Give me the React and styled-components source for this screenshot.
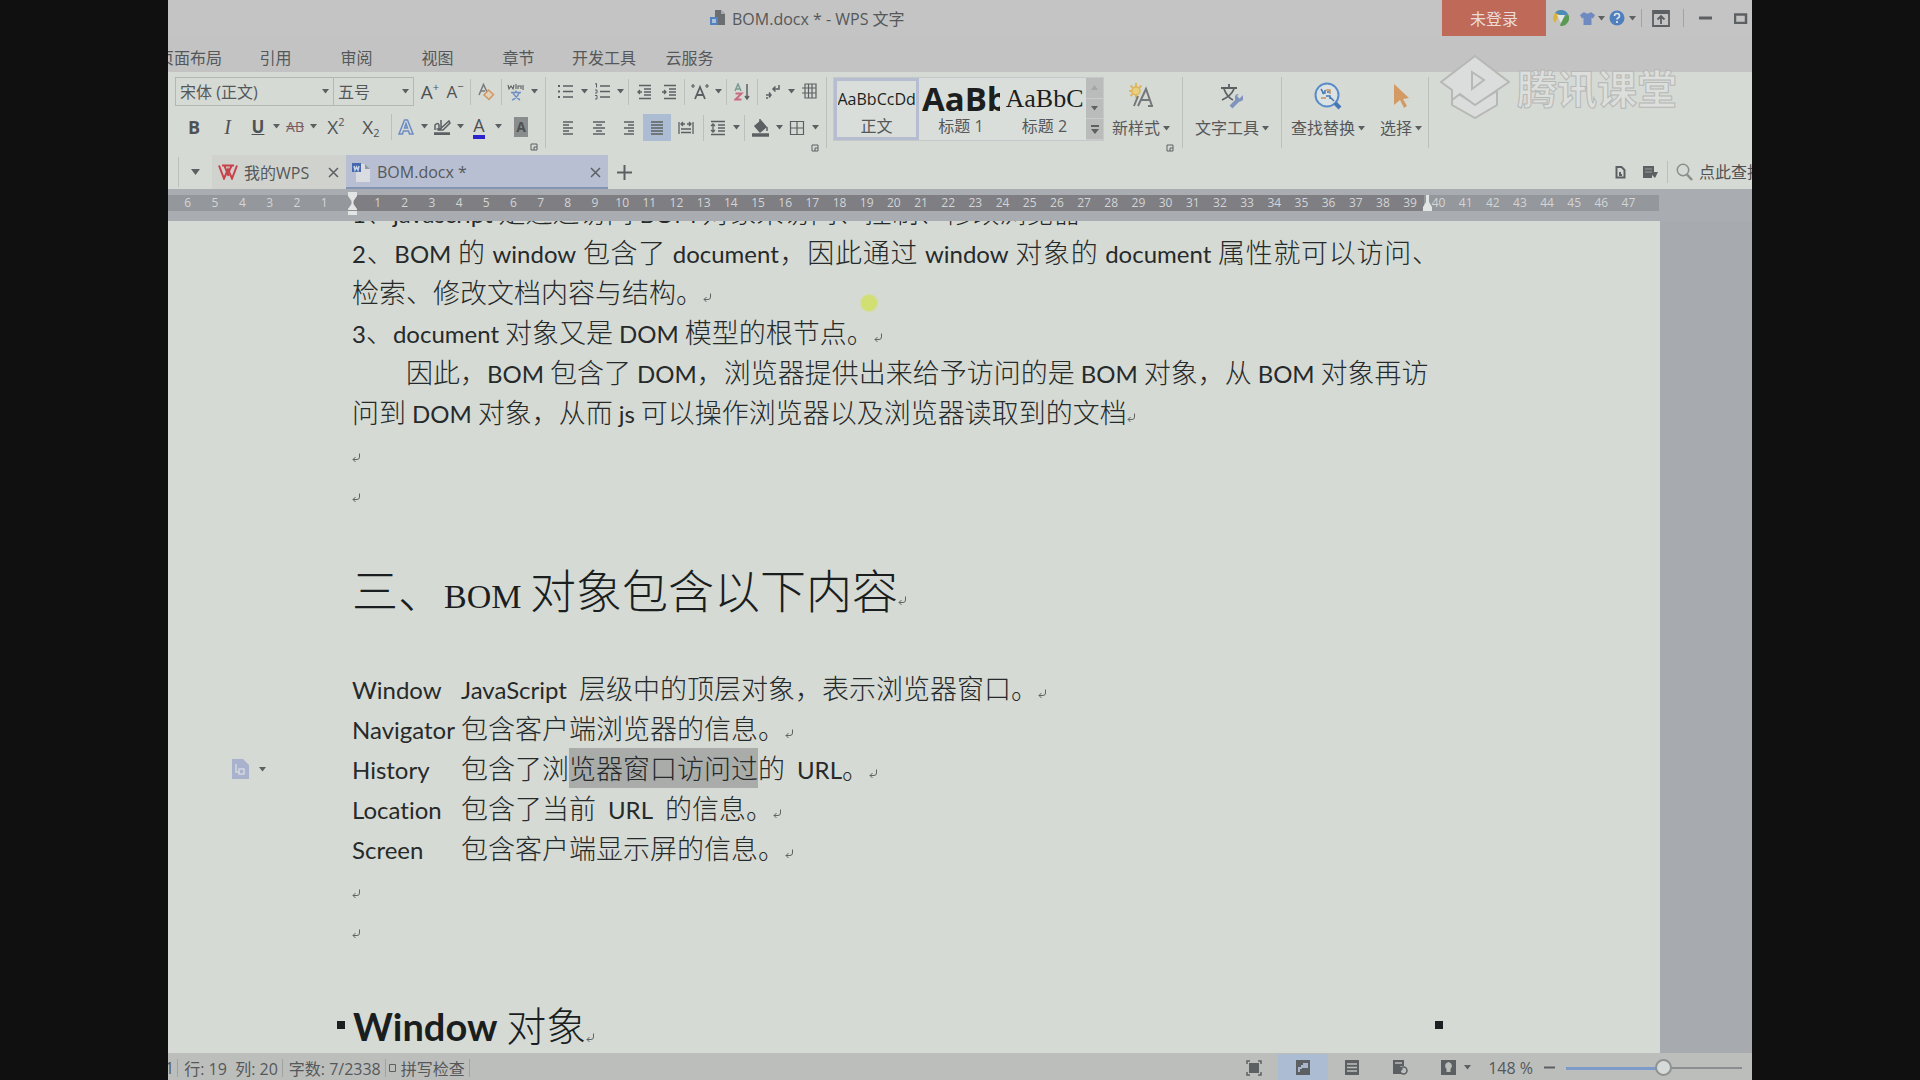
import React from "react";
import styled, { createGlobalStyle } from "styled-components";

const ui = `"Open Sans", "Noto Sans CJK SC", sans-serif`;
const bodyFont = `"Noto Sans CJK SC", sans-serif`;

const Global = createGlobalStyle`
  *, *::before, *::after { box-sizing: border-box; }
  body { margin: 0; background: #101010; font-family: ${ui}; font-size: 16px; color: #55585a; }
  button, select, input { font: inherit; color: inherit; }
  button { background: none; border: 0; padding: 0; margin: 0; }
  svg { display: block; flex: none; }
`;

const Stage = styled.div`
  display: flex;
  justify-content: center;
  height: 100vh;
  overflow: hidden;
`;

const AppWindow = styled.div`
  position: relative;
  display: flex;
  flex-direction: column;
  width: 82.5%;
  overflow: hidden;
  background: #a7aaae;
`;

/* Title bar */
const TitleBar = styled.header`
  display: flex;
  align-items: flex-start;
  height: 37px;
  padding-left: 542px;
  background: #c4c4c4;
`;
const Title = styled.h1`
  display: flex;
  align-items: center;
  gap: 6px;
  height: 36px;
  margin: 0 auto 0 0;
  font-size: 16px;
  font-weight: 400;
  white-space: nowrap;
`;
const Login = styled.button`
  width: 104px;
  height: 36px;
  background: #bf6959;
  color: #ecdcd8;
`;
const TitleTools = styled.div`
  display: flex;
  align-items: center;
  height: 36px;
`;
const Cell = styled.button`
  display: inline-flex;
  align-items: center;
  justify-content: ${(p) => (p.$end ? "flex-end" : "center")};
  gap: 8px;
  flex: none;
  width: ${(p) => p.$w}px;
  height: 27px;
  background: ${(p) => (p.$on ? "#acbcd2" : "none")};
`;
const Divider = styled.span`
  flex: none;
  width: 1px;
  height: ${(p) => p.$h}px;
  margin: 0 ${(p) => (p.$m === undefined ? 2 : p.$m)}px;
  background: ${(p) => p.$c || "#bcc0bd"};
`;

/* Menu */
const Menu = styled.nav`
  display: flex;
  height: 35px;
  margin-left: -23px;
  background: #c3c3c3;
`;
const MenuItem = styled.button`
  min-width: 81px;
  height: 42px;
  padding: 0 13px;
  line-height: 42px;
  white-space: nowrap;
`;

/* Ribbon */
const Ribbon = styled.section`
  display: flex;
  height: 83px;
  padding: 5px 0 0 7px;
  background: #d6dad5;
`;
const Group = styled.div`
  display: flex;
  flex-direction: column;
  flex: none;
  padding: 0 ${(p) => p.$r || 5}px 0 ${(p) => p.$l || 0}px;
`;
const Row = styled.div`
  display: flex;
  align-items: center;
  height: 29px;
  margin-bottom: ${(p) => p.$gap || 0}px;
  padding-left: ${(p) => p.$l || 0}px;
`;
const Corner = styled.button`
  align-self: flex-end;
  width: 12px;
  height: 10px;
  padding: 2px;
`;
const Picker = styled.label`
  position: relative;
  display: flex;
  align-items: center;
  flex: none;
  width: ${(p) => p.$w}px;
  height: 29px;
  margin-right: ${(p) => p.$m || 0}px;
  border: 1px solid #b4b8b5;
  & + & { border-left: 0; }
  select {
    appearance: none;
    flex: 1;
    min-width: 0;
    height: 27px;
    padding: 0 0 0 4px;
    border: 0;
    background: transparent;
  }
  svg { margin-right: 4px; }
`;
const Glyph = styled.span`
  font-size: ${(p) => p.$s || 19}px;
  line-height: 20px;
  color: ${(p) => p.$c || "#4f5254"};
  font-weight: ${(p) => (p.$b ? 700 : 500)};
  font-style: ${(p) => (p.$i ? "italic" : "normal")};
  font-family: ${(p) => (p.$i ? `"Liberation Serif", serif` : ui)};
  text-decoration: ${(p) => p.$d || "none"};
  border-bottom: ${(p) => (p.$bar ? `4px solid ${p.$bar}` : "0")};
  background: ${(p) => p.$bg || "none"};
  padding: ${(p) => (p.$bg ? "0 2px" : "0")};
  sup, sub { font-size: 11px; line-height: 0; }
  sup { vertical-align: 8px; }
  sub { vertical-align: -3px; }
`;
const Gallery = styled.div`
  display: flex;
  height: 64px;
  border: 1px solid #c4c8c8;
  background: #dadeda;
`;
const StyleCard = styled.button`
  display: flex;
  flex-direction: column;
  align-items: center;
  width: ${(p) => p.$w}px;
  height: 62px;
  overflow: hidden;
  border: 3px solid ${(p) => (p.$on ? "#b7bdd0" : "transparent")};
`;
const Sample = styled.span`
  height: 36px;
  width: 78px;
  overflow: hidden;
  text-align: left;
  white-space: nowrap;
  color: #1c1f1e;
  font: ${(p) => p.$font};
`;
const CardLabel = styled.span`
  line-height: 18px;
`;
const Scroller = styled.div`
  display: flex;
  flex-direction: column;
  width: 17px;
  background: #b9bcba;
`;
const ScrollBtn = styled.button`
  display: flex;
  align-items: center;
  justify-content: center;
  flex: 1;
  border-bottom: 1px solid #c9ccca;
`;
const BigTool = styled.button`
  display: flex;
  flex-direction: column;
  align-items: center;
  flex: none;
  width: ${(p) => p.$w}px;
  height: 65px;
`;
const BigIcon = styled.span`
  display: flex;
  align-items: center;
  justify-content: center;
  height: 38px;
`;
const BigLabel = styled.span`
  display: flex;
  align-items: center;
  gap: 3px;
  line-height: 26px;
  white-space: nowrap;
`;

/* Watermark laid over the ribbon */
const Watermark = styled.div`
  position: absolute;
  top: 55px;
  right: 75px;
  display: flex;
  align-items: center;
  gap: 7px;
  font: 700 40px/64px ${bodyFont};
  color: #dddfdd;
  -webkit-text-stroke: 1px #b6b8b6;
  pointer-events: none;
`;

/* Document tabs */
const TabBar = styled.div`
  display: flex;
  align-items: center;
  height: 34px;
  padding-left: 10px;
  background: #d6dad5;
`;
const Tab = styled.div`
  display: flex;
  align-items: center;
  flex: none;
  gap: 6px;
  width: ${(p) => p.$w}px;
  height: 34px;
  padding: 2px 5px 0 6px;
  background: ${(p) => (p.$on ? "#b8bfd2" : "#d0d2cd")};
  border-bottom: 2px solid ${(p) => (p.$on ? "#8296b4" : "#d0d2cd")};
`;
const TabName = styled.button`
  flex: 1;
  text-align: left;
  white-space: nowrap;
`;
const TabEnd = styled.div`
  display: flex;
  align-items: center;
  margin-left: auto;
  width: 147px;
  overflow: hidden;
`;
const Search = styled.label`
  display: flex;
  align-items: center;
  gap: 6px;
  padding-left: 8px;
  input {
    width: 120px;
    padding: 0;
    border: 0;
    background: transparent;
    &::placeholder { color: #4f5254; opacity: 1; }
  }
`;

/* Ruler */
const RulerWrap = styled.div`
  height: 32px;
  padding: 6px 93px 0 0;
  background: #a9acb0;
`;
const Ruler = styled.div`
  position: relative;
  display: grid;
  grid-template-columns: minmax(0, 184fr) minmax(0, 1072fr) minmax(0, 235fr);
  height: 16px;
`;
const Scale = styled.div`
  display: flex;
  padding: 0 ${(p) => p.$r}px 0 ${(p) => p.$l}px;
  background: ${(p) => (p.$dark ? "#7e7e83" : "#94979b")};
  color: #d3d5d6;
  font-size: 12px;
  line-height: 16px;
  span { flex: 1 1 0; width: 0; text-align: center; }
`;
const Marker = styled.div`
  position: absolute;
  top: -3px;
  left: ${(p) => p.$x};
`;

/* Page */
const Desk = styled.main`
  flex: 1;
  min-height: 0;
  overflow: hidden;
  padding-right: 92px;
`;
const Sheet = styled.article`
  position: relative;
  height: 100%;
  padding-left: 184px;
  overflow: hidden;
  background: #d5dad5;
  color: #272a2a;
  font-family: ${bodyFont};
  font-size: 27px;
  font-weight: 300;
  font-variant-ligatures: none;
`;
const Flow = styled.div`
  margin-top: -29px;
`;
const Line = styled.p`
  display: flex;
  height: 40px;
  margin: 0;
  line-height: 40px;
  white-space: pre;
  padding-left: ${(p) => (p.$indent ? 54 : 0)}px;
`;
/* A full line of a justified paragraph; the closing mark may hang in the margin. */
const FullLine = styled.p`
  width: 1087px;
  height: 40px;
  margin: 0;
  line-height: 40px;
  white-space: nowrap;
  text-align: justify;
  text-align-last: justify;
`;
const Latin = styled.span`
  font-family: Lato, sans-serif;
  font-size: 24px;
  font-weight: 400;
`;
const Picked = styled.mark`
  height: 40px;
  background: #aaacaa;
  color: inherit;
`;
const Section = styled.h2`
  display: flex;
  height: 60px;
  margin: 46px 0 50px;
  font-size: 46px;
  font-weight: 300;
  line-height: 60px;
  white-space: pre;
  color: #1b1e1e;
`;
const SectionLatin = styled.span`
  font-family: "Liberation Serif", serif;
  font-size: 34px;
  font-weight: 400;
`;
const Term = styled.span`
  width: 109px;
`;
const Sub = styled.h3`
  display: flex;
  align-items: center;
  height: 60px;
  margin: 47px 0 0 -15px;
  font-size: 40px;
  font-weight: 300;
  line-height: 60px;
  white-space: pre;
  color: #1b1e1e;
`;
const SubLatin = styled.span`
  font-family: Lato, sans-serif;
  font-size: 38px;
  font-weight: 700;
`;
const Dot = styled.span`
  width: 8px;
  height: 8px;
  margin-right: ${(p) => p.$r || 0}px;
  margin-left: ${(p) => (p.$end ? "auto" : 0)};
  background: #1c1f1f;
`;
const Pointer = styled.span`
  position: absolute;
  left: 693px;
  top: 74px;
  width: 16px;
  height: 16px;
  border-radius: 50%;
  background: #d2df72;
  box-shadow: 0 0 3px #d2df72;
`;
const PasteTag = styled.button`
  position: absolute;
  left: 64px;
  top: 538px;
  display: flex;
  align-items: center;
  gap: 10px;
`;
const Return = styled.span`
  display: flex;
  align-self: flex-end;
  padding-bottom: ${(p) => p.$b || 9}px;
`;

/* Status bar */
const Status = styled.footer`
  display: flex;
  align-items: center;
  height: 27px;
  padding-top: 2px;
  background: #bcbebc;
  white-space: pre;
`;
const StatusText = styled.span`
  padding: 0 ${(p) => p.$r || 4}px 0 ${(p) => p.$l || 6}px;
`;
const PageNumber = styled.span`
  margin-left: -3px;
  padding-right: 3px;
`;
const StatusEnd = styled.div`
  display: flex;
  align-items: center;
  margin-left: auto;
`;
const Zoom = styled.input`
  appearance: none;
  width: 176px;
  height: 16px;
  margin: 0 10px 0 7px;
  background: linear-gradient(#7d9ac8, #7d9ac8) 0 7px / 97px 3px no-repeat,
    linear-gradient(#8b8e8e, #8b8e8e) 0 7px / 100% 2px no-repeat;
  &::-webkit-slider-thumb {
    appearance: none;
    width: 17px;
    height: 17px;
    border: 2px solid #8e9292;
    border-radius: 50%;
    background: #d6dad8;
  }
`;

const G = "#5d6062";
const Svg = ({ w = 18, h = 18, children, ...r }) => (
  <svg width={w} height={h} viewBox={`0 0 ${w} ${h}`} fill="none" stroke={G} strokeWidth="1.5" aria-hidden="true" {...r}>{children}</svg>
);
const Caret = () => <Svg w={7} h={5} stroke="none"><path d="M0 0h7L3.5 4.5z" fill={G} /></Svg>;
const CaretBtn = ({ w = 12, label }) => <Cell $w={w} aria-label={label + "选项"}><Caret /></Cell>;
const Cross = () => <Svg w={11} h={11}><path d="M1 1l9 9M10 1l-9 9" /></Svg>;
const Mark = ({ b }) => (
  <Return $b={b}>
    <Svg w={9} h={10} strokeWidth="1" stroke="#5f6363">
      <path d="M7.500 .5v3.500q0 2.500-2.500 2.500H1M3.500 4L1 6.500 3.500 9" />
    </Svg>
  </Return>
);
const Launcher = ({ label }) => (
  <Corner aria-label={label}><Svg w={8} h={8}><path d="M7 4V1H1v6h3M4 4h3v3H4z" strokeWidth="1" /></Svg></Corner>
);
const lines = (rows) => rows.map(([y, a, b]) => `M${a} ${y}H${b}`).join("");

const Bullets = ({ num }) => (
  <Svg w={17} h={17} strokeWidth="1.4">
    <path d="M6 3h10M6 8.500h10M6 14h10" />
    {num ? <path d="M1 1l1.500-.5v4M1 7h2v3H1M1 12.500h2v3.500H1" strokeWidth="1" /> : <path d="M1 3h2M1 8.500h2M1 14h2" strokeWidth="2" />}
  </Svg>
);
const Indent = ({ out }) => (
  <Svg w={15} h={16} strokeWidth="1.4">
    <path d="M2 1.500h12M7 5h7M7 8h7M7 11h7M2 14.500h12" />
    <path d={out ? "M5 8H1M3 6L1 8l2 2" : "M0 8h4M2 6l2 2-2 2"} />
  </Svg>
);
const Align = ({ k }) => {
  const r = { l: [[1, 11], [1, 7]], c: [[1, 13], [4, 10]], r: [[3, 13], [7, 13]], j: [[1, 13], [1, 13]] }[k];
  return <Svg w={14} h={14} strokeWidth="1.5"><path d={lines([1, 4, 7, 10, 13].map((y, i) => [y, r[i % 2][0], r[i % 2][1]]))} /></Svg>;
};

const rich = (text) => (
  <span>{text.split(/([A-Za-z0-9/]+)/).map((t, i) => (i % 2 ? <Latin key={i}>{t}</Latin> : t))}</span>
);
const range = (a, b) => Array.from({ length: b - a + 1 }, (_, i) => a + i);

export default function App() {
  return (
    <Stage>
      <Global />
      <AppWindow>
        <TitleBar>
          <Title>
            <Svg w={16} h={16} stroke="none">
              <path d="M5 0h6l4 4v11H5z" fill="#6b6e70" /><path d="M11 0v4h4" fill="#a9acac" />
              <path d="M0 7h8v8H0z" fill="#5582bd" /><path d="M2 9h4v4H2z" fill="#a9bfdc" />
            </Svg>
            BOM.docx * - WPS 文字
          </Title>
          <Login>未登录</Login>
          <TitleTools>
            <Cell $w={30} aria-label="皮肤中心">
              <Svg w={16} h={16} stroke="none">
                <path d="M8 0a8 8 0 0 0-6 13L5 7z" fill="#d9b53e" /><path d="M8 0a8 8 0 0 1 7 4l-5 4-5-4L2 3q2-3 6-3" fill="#4d8bb8" />
                <path d="M15 4a8 8 0 0 1-8 12l2-7z" fill="#5a9a54" /><path d="M4 5l4 8 4-8z" fill="#e3e6e4" />
              </Svg>
            </Cell>
            <Cell $w={22} aria-label="换肤"><Svg w={15} h={15} stroke="none"><path d="M4 1q3.500 3 7 0l4 3-2 3.500-1.500-1V14h-8V6.500L2 7.500 0 4z" fill="#6f8ac0" /></Svg></Cell>
            <Caret />
            <Cell $w={24} aria-label="帮助"><Svg w={16} h={16} stroke="none"><circle cx="8" cy="8" r="7.500" fill="#4f7fbd" /><path d="M5.500 6q0-2.500 2.500-2.500T10.500 6q0 1.200-1.500 2-1 .6-1 1.600M8 11v2" stroke="#dde4ea" strokeWidth="1.700" /></Svg></Cell>
            <Caret />
            <Divider $h={18} $m={5} $c="#a2a4a4" />
            <Cell $w={28} aria-label="隐藏功能区"><Svg><path d="M1 2h16v15H1zM1 4h16M9 15V7.500M5.500 10.500L9 7l3.500 3.500" strokeWidth="1.800" /></Svg></Cell>
            <Divider $h={18} $m={8} $c="#a2a4a4" />
            <Cell $w={26} aria-label="最小化"><Svg w={13} h={4}><path d="M0 2h13" strokeWidth="3" /></Svg></Cell>
            <Cell $w={34} $end aria-label="最大化"><Svg w={18} h={11}><path d="M1 1.500h11v8.500H1z" strokeWidth="2.500" /></Svg></Cell>
          </TitleTools>
        </TitleBar>
        <Menu>
          {["页面布局", "引用", "审阅", "视图", "章节", "开发工具", "云服务"].map((m) => <MenuItem key={m}>{m}</MenuItem>)}
        </Menu>

        <Ribbon>
          <Group>
            <Row $gap={6}>
              <Picker $w={159}><select aria-label="字体"><option>宋体 (正文)</option></select><Caret /></Picker>
              <Picker $w={80} $m={4}><select aria-label="字号"><option>五号</option></select><Caret /></Picker>
              <Cell $w={24}><Glyph>A<sup>+</sup></Glyph></Cell>
              <Cell $w={26}><Glyph $s={17}>A<sup>−</sup></Glyph></Cell>
              <Divider $h={26} />
              <Cell $w={26} aria-label="清除格式"><Svg><path d="M2 12L6.500 1.500 10 9M4 8h4" stroke="#77797b" /><path d="M11.500 7l5 4.500-4.500 5-5-4.500z" fill="#e0d2bd" stroke="#d0975f" /></Svg></Cell>
              <Divider $h={26} />
              <Cell $w={24} aria-label="拼音指南"><Svg><path d="M1 2l1 4 2-3 2 3 1-4M9 1v5M11 6V3h3v3M16 2v5" strokeWidth="1.100" /><path d="M4 9.500h10M9 7.500v2M6 10q2 4 7 7M12 10q-2 5-7 7" stroke="#6f8fc4" /></Svg></Cell>
              <CaretBtn label="拼音" />
            </Row>
            <Row $l={5}>
              <Cell $w={28}><Glyph $s={18} $b>B</Glyph></Cell>
              <Cell $w={39}><Glyph $s={20} $i>I</Glyph></Cell>
              <Cell $w={22}><Glyph $s={17} $b $d="underline">U</Glyph></Cell>
              <CaretBtn w={14} label="下划线" />
              <Cell $w={24}><Glyph $s={14} $c="#7d5d60" $d="line-through">AB</Glyph></Cell>
              <CaretBtn label="删除线" />
              <Cell $w={34}><Glyph>X<sup>2</sup></Glyph></Cell>
              <Cell $w={36}><Glyph>X<sub>2</sub></Glyph></Cell>
              <Divider $h={26} />
              <Cell $w={24} aria-label="文字效果"><Svg w={16} h={16}><path d="M1 15L6.500 1h3L15 15h-3.500l-1-3h-5l-1 3zM6.500 9h3L8 4.500z" stroke="#6c8cc4" /></Svg></Cell>
              <CaretBtn label="文字效果" />
              <Cell $w={24} aria-label="突出显示"><Svg w={18} h={17}><path d="M1 16h16" strokeWidth="3.500" /><path d="M2 12V7q3-3 4 0v4H3.500M8 2v9M6 12L16 3l1 2-7 7z" /></Svg></Cell>
              <CaretBtn label="突出显示" />
              <Cell $w={26}><Glyph $s={18} $bar="#2a23cf">A</Glyph></Cell>
              <CaretBtn label="字体颜色" />
              <Cell $w={34}><Glyph $s={14} $b $bg="#8a8d8d">A</Glyph></Cell>
            </Row>
            <Launcher label="字体设置" />
          </Group>
          <Divider $h={71} $m={0} />
          <Group $l={6}>
            <Row $gap={7}>
              <Cell $w={26} aria-label="项目符号"><Bullets /></Cell><CaretBtn label="项目符号" />
              <Cell $w={24} aria-label="编号"><Bullets num /></Cell><CaretBtn label="编号" />
              <Divider $h={26} />
              <Cell $w={26} aria-label="减少缩进"><Indent out /></Cell>
              <Cell $w={25} aria-label="增加缩进"><Indent /></Cell>
              <Divider $h={26} />
              <Cell $w={25} aria-label="中文版式"><Svg><path d="M4 16L9 4l5 12M6 12h6" strokeWidth="1.800" /><path d="M0 3h4M2 1v4M14 3h4M16 1v4" strokeWidth="1.200" /></Svg></Cell><CaretBtn label="中文版式" />
              <Divider $h={26} />
              <Cell $w={26} aria-label="排序"><Svg w={16} h={18}><path d="M1 8l3-7 3 7M2 6h4" stroke="#7b9a94" /><path d="M1.500 10.500h6l-6 6h6" stroke="#c96a80" strokeWidth="2" /><path d="M13 1v14M11 13l2 3 2-3" /></Svg></Cell>
              <Divider $h={26} />
              <Cell $w={25} aria-label="显示标记"><Svg w={16} h={16}><path d="M14 1v4H8M10.500 2.500L8 5l2.500 2.500M1 11h5M4 8.500L6 11l-2 2.500M1 14h2" /></Svg></Cell><CaretBtn label="显示标记" />
              <Cell $w={24} aria-label="制表位"><Svg w={16} h={17}><path d="M4 1h11v14H4zM1 5h14M1 10h14M7.500 1v14M11 1v14" strokeWidth="1.200" /></Svg></Cell>
            </Row>
            <Row $l={2}>
              <Cell $w={30} aria-label="左对齐"><Align k="l" /></Cell>
              <Cell $w={29} aria-label="居中"><Align k="c" /></Cell>
              <Cell $w={30} aria-label="右对齐"><Align k="r" /></Cell>
              <Cell $w={28} $on aria-label="两端对齐"><Align k="j" /></Cell>
              <Cell $w={30} aria-label="分散对齐"><Svg w={16} h={14}><path d="M1 1v12M15 1v12M3 3h4M9 3h4M5 1L3 3l2 2M11 1l2 2-2 2M3 8h10M3 11.500h10" strokeWidth="1.300" /></Svg></Cell>
              <Divider $h={26} />
              <Cell $w={24} aria-label="行距"><Svg w={16} h={16}><path d="M1 1.500h14M8 5h7M8 8h7M8 11h7M1 14.500h14M3 4v8M1 6l2-2 2 2M1 10l2 2 2-2" strokeWidth="1.300" /></Svg></Cell><CaretBtn label="行距" />
              <Divider $h={26} />
              <Cell $w={26} aria-label="底纹"><Svg w={17} h={18}><path d="M0 16h17" strokeWidth="3.500" /><path d="M3 7l6-5 5 6-6 5z" fill={G} /><path d="M8 0v5M15 8v4" /></Svg></Cell><CaretBtn label="底纹" />
              <Cell $w={24} aria-label="边框"><Svg w={16} h={16}><path d="M1.500 1.500h13v13h-13zM8 1.500v13M1.500 8h13" strokeWidth="1.200" /></Svg></Cell><CaretBtn label="边框" />
            </Row>
            <Launcher label="段落设置" />
          </Group>
          <Divider $h={71} $m={0} />
          <Group $l={6} $r={2}>
            <Gallery>
              <StyleCard $w={85} $on><Sample $font={`400 16px/36px ${ui}`}>AaBbCcDd</Sample><CardLabel>正文</CardLabel></StyleCard>
              <StyleCard $w={84}><Sample $font={`700 33px/36px ${ui}`}>AaBb</Sample><CardLabel>标题 1</CardLabel></StyleCard>
              <StyleCard $w={83}><Sample $font={`400 26px/36px "Liberation Serif", serif`}>AaBbC</Sample><CardLabel>标题 2</CardLabel></StyleCard>
              <Scroller>
                <ScrollBtn aria-label="上一行"><Svg w={7} h={5} stroke="none"><path d="M0 5h7L3.500 0z" fill="#a3a6a5" /></Svg></ScrollBtn>
                <ScrollBtn aria-label="下一行"><Caret /></ScrollBtn>
                <ScrollBtn aria-label="更多样式"><Svg w={8} h={9} stroke="none"><path d="M0 0h8v2H0zM0 4h8L4 9z" fill={G} /></Svg></ScrollBtn>
              </Scroller>
            </Gallery>
          </Group>
          <Group $r={6}>
            <BigTool $w={70}>
              <BigIcon>
                <Svg w={26} h={26}><path d="M8 0v4M8 12v3M1 8h3M2.500 2.500l3 3M13.500 2.500l-3 3M2.500 13l3-3" stroke="#dfb660" strokeWidth="2" /><circle cx="8" cy="8" r="4" fill="#e9d07f" stroke="#dfb660" /><path d="M10 23L18 6l6 17M13 17h9M20 23h5M6 23l4-10" strokeWidth="2" stroke="#75787a" /></Svg>
              </BigIcon>
              <BigLabel>新样式<Caret /></BigLabel>
            </BigTool>
            <Launcher label="样式设置" />
          </Group>
          <Divider $h={71} $m={0} />
          <BigTool $w={98}>
            <BigIcon><Svg w={25} h={26}><path d="M1 5h16M9 1v4M4 6q3 8 9 11M14 6Q11 13 2 17" strokeWidth="1.800" /><path d="M11 24l7-7" stroke="#7f93bd" strokeWidth="4" /><path d="M23 12l-3.500 3.500L17 13l2-2q-5 0-4 5 3 5 8 1z" fill="#7f93bd" stroke="none" /></Svg></BigIcon>
            <BigLabel>文字工具<Caret /></BigLabel>
          </BigTool>
          <Divider $h={71} $m={0} />
          <BigTool $w={92}>
            <BigIcon><Svg w={28} h={28}><circle cx="13" cy="13" r="11.500" stroke="#5b8cc8" strokeWidth="2" fill="#dbe2e4" /><path d="M21 21l5 5" stroke="#4677b5" strokeWidth="4" /><path d="M7 7l3 5M8 11h3v-3M13 10h3M12 14h4v3M16 15l4 4" stroke="#4677b5" /><path d="M12 8h4v4M7 16h5" stroke="#c9935c" /></Svg></BigIcon>
            <BigLabel>查找替换<Caret /></BigLabel>
          </BigTool>
          <BigTool $w={54}>
            <BigIcon><Svg w={16} h={24} stroke="none"><path d="M1 0l15 14-6 1 4 7-3 2-4-8-6 5z" fill="#d39a63" /></Svg></BigIcon>
            <BigLabel>选择<Caret /></BigLabel>
          </BigTool>
          <Divider $h={71} $m={0} />
        </Ribbon>

        <TabBar>
          <Divider $h={30} $m={0} />
          <Cell $w={33} aria-label="标签列表"><Svg w={9} h={6} stroke="none"><path d="M0 0h9L4.500 6z" fill={G} /></Svg></Cell>
          <Tab $w={134}>
            <Svg w={20} h={16}><path d="M1 1.500l5 13 4-9 4 9 5-13M4 1.500h12M6.500 2l4 10M13.500 2l-3 6" stroke="#c9404b" strokeWidth="2" /></Svg>
            <TabName>我的WPS</TabName>
            <Cell $w={15} aria-label="关闭 我的WPS"><Cross /></Cell>
          </Tab>
          <Tab $w={262} $on>
            <Svg w={19} h={19} stroke="none"><path d="M4 1h9l5 5v13H4z" fill="#d9dde2" /><path d="M13 1v5h5z" fill="#8e98aa" /><path d="M0 0h9v9H0z" fill="#4668ad" /><path d="M2 3l1 4 1.500-3L6 7l1-4" stroke="#c8d2e6" /></Svg>
            <TabName>BOM.docx *</TabName>
            <Cell $w={15} aria-label="关闭 BOM.docx"><Cross /></Cell>
          </Tab>
          <Cell $w={32} aria-label="新建"><Svg w={15} h={15}><path d="M7.500 0v15M0 7.500h15" strokeWidth="2" /></Svg></Cell>
          <TabEnd>
            <Cell $w={30} aria-label="文档"><Svg w={11} h={13}><path d="M1.500 1h5l3 3v7.500h-8zM5 6v3h2" strokeWidth="2" /></Svg></Cell>
            <Cell $w={32} aria-label="任务窗格"><Svg w={16} h={15} stroke="none"><path d="M0 1h11v6h4l-3 6-3-3v3H0z" fill={G} /><path d="M2 4h7M2 7h7" stroke="#999c9b" strokeWidth="1" /></Svg></Cell>
            <Divider $h={22} $m={0} />
            <Search>
              <Svg w={17} h={18} stroke="#8b8e8d"><circle cx="7" cy="7" r="5.700" /><path d="M11 11.500l5 5.500" strokeWidth="2.500" /></Svg>
              <input aria-label="查找" placeholder="点此查找命令" />
            </Search>
          </TabEnd>
        </TabBar>

        <RulerWrap>
          <Ruler>
            <Scale $l={6} $r={14}>{range(1, 6).reverse().map((n) => <span key={n}>{n}</span>)}</Scale>
            <Scale $dark $l={12} $r={0}>{range(1, 39).map((n) => <span key={n}>{n}</span>)}</Scale>
            <Scale $l={1} $r={17}>{range(40, 47).map((n) => <span key={n}>{n}</span>)}</Scale>
            <Marker $x="calc(12.34% - 4px)"><Svg w={9} h={25} stroke="none"><path d="M0 0h9v4L5.500 9v3L9 17v6H0v-6l3.500-5V9L0 4z" fill="#e3e5e5" /><path d="M0 18.500h9" stroke="#8b8d91" strokeWidth="1" /></Svg></Marker>
            <Marker $x="calc(84.44% - 4px)"><Svg w={9} h={19} stroke="none"><path d="M3 3h3v7l3 5v4H0v-4l3-5z" fill="#e3e5e5" /></Svg></Marker>
          </Ruler>
        </RulerWrap>

        <Desk>
          <Sheet>
            <Flow>
              <Line>{rich("1、javascript 是通过访问 BOM 对象来访问、控制、修改浏览器")}</Line>
              <FullLine>{rich("2、BOM 的 window 包含了 document，因此通过 window 对象的 document 属性就可以访问、")}</FullLine>
              <Line>检索、修改文档内容与结构。<Mark /></Line>
              <Line>{rich("3、document 对象又是 DOM 模型的根节点。")}<Mark /></Line>
              <Line $indent>{rich("因此，BOM 包含了 DOM，浏览器提供出来给予访问的是 BOM 对象，从 BOM 对象再访")}</Line>
              <Line>{rich("问到 DOM 对象，从而 js 可以操作浏览器以及浏览器读取到的文档")}<Mark /></Line>
              <Line><Mark /></Line>
              <Line><Mark /></Line>
              <Section><span>三、<SectionLatin>BOM </SectionLatin>对象包含以下内容</span><Mark b={12} /></Section>
              <Line><Term>{rich("Window")}</Term>{rich("JavaScript  层级中的顶层对象，表示浏览器窗口。")}<Mark /></Line>
              <Line><Term>{rich("Navigator")}</Term>包含客户端浏览器的信息。<Mark /></Line>
              <Line><Term>{rich("History")}</Term>包含了浏<Picked>览器窗口访问过</Picked>{rich("的  URL。")}<Mark /></Line>
              <Line><Term>{rich("Location")}</Term>{rich("包含了当前  URL  的信息。")}<Mark /></Line>
              <Line><Term>{rich("Screen")}</Term>包含客户端显示屏的信息。<Mark /></Line>
              <Line><Mark /></Line>
              <Line><Mark /></Line>
              <Sub><Dot $r={8} /><span><SubLatin>Window</SubLatin> 对象</span><Mark b={12} /><Dot $end $r={217} /></Sub>
            </Flow>
            <Pointer />
            <PasteTag aria-label="粘贴选项">
              <Svg w={17} h={20} stroke="none"><path d="M0 0h11l6 6v14H0z" fill="#a9b2cd" /><path d="M4 5v8h4M7 10h5v5H7z" stroke="#d2d7df" strokeWidth="1.500" /></Svg>
              <Caret />
            </PasteTag>
          </Sheet>
        </Desk>

        <Status>
          <PageNumber>1</PageNumber>
          <Divider $h={18} $m={0} $c="#a0a3a2" />
          <StatusText>行: 19  列: 20</StatusText>
          <Divider $h={18} $m={0} $c="#a0a3a2" />
          <StatusText>字数: 7/2338</StatusText>
          <Divider $h={18} $m={0} $c="#a0a3a2" />
          <Cell $w={14} aria-label="拼写检查开关"><Svg w={7} h={8}><path d="M.5 .5h6v7h-6z" strokeWidth="1" /></Svg></Cell>
          <StatusText $l={1}>拼写检查</StatusText>
          <Divider $h={18} $m={0} $c="#a0a3a2" />
          <StatusEnd>
            <Cell $w={48} aria-label="全屏显示"><Svg w={16} h={16}><path d="M3 3h10v10H3z" fill={G} stroke="none" /><path d="M1 4V1h3M12 1h3v3M15 12v3h-3M4 15H1v-3" /></Svg></Cell>
            <Cell $w={50} $on aria-label="页面视图"><Svg w={14} h={15} stroke="none"><path d="M0 0h14v15H0z" fill={G} /><path d="M2 12V7h3V5h2V3h5v5H6v1H4v3z" fill="#a7b6ca" /></Svg></Cell>
            <Cell $w={48} aria-label="大纲视图"><Svg w={14} h={15} stroke="none"><path d="M0 0h14v15H0z" fill={G} /><path d="M2 4h10M2 7.500h10M2 11h10" stroke="#bcbebc" /></Svg></Cell>
            <Cell $w={48} aria-label="Web 版式"><Svg w={15} h={15} stroke="none"><path d="M0 0h11v6H7l3 3-2 2v3H0z" fill={G} /><path d="M2 3h7" stroke="#bcbebc" /><circle cx="10.500" cy="10.500" r="3.500" stroke={G} /></Svg></Cell>
            <Cell $w={47} $end aria-label="护眼模式"><Svg w={15} h={15} stroke="none"><path d="M0 0h15v15H0z" fill={G} /><path d="M7.500 2a4 4 0 0 1 2 7v3h-4V9a4 4 0 0 1 2-7z" fill="#bcbebc" /></Svg><Caret /></Cell>
            <StatusText $l={17} $r={6}>148 %</StatusText>
            <Cell $w={20} aria-label="缩小"><Svg w={11} h={3}><path d="M0 1.500h11" strokeWidth="2" /></Svg></Cell>
            <Zoom type="range" min="0" max="100" defaultValue="56" aria-label="显示比例" />
          </StatusEnd>
        </Status>

        <Watermark aria-hidden="true">
          <Svg w={70} h={64} strokeWidth="2" stroke="#b6b8b6">
            <path d="M12 36v14l23 13 22-13V36L35 49l-15-9z" fill="#dadddb" />
            <path d="M35 1l34 26-34 23-15-11-8 6V35L1 27z" fill="#dadddb" />
            <path d="M32 17v17l12-9z" />
          </Svg>
          腾讯课堂
        </Watermark>
      </AppWindow>
    </Stage>
  );
}
